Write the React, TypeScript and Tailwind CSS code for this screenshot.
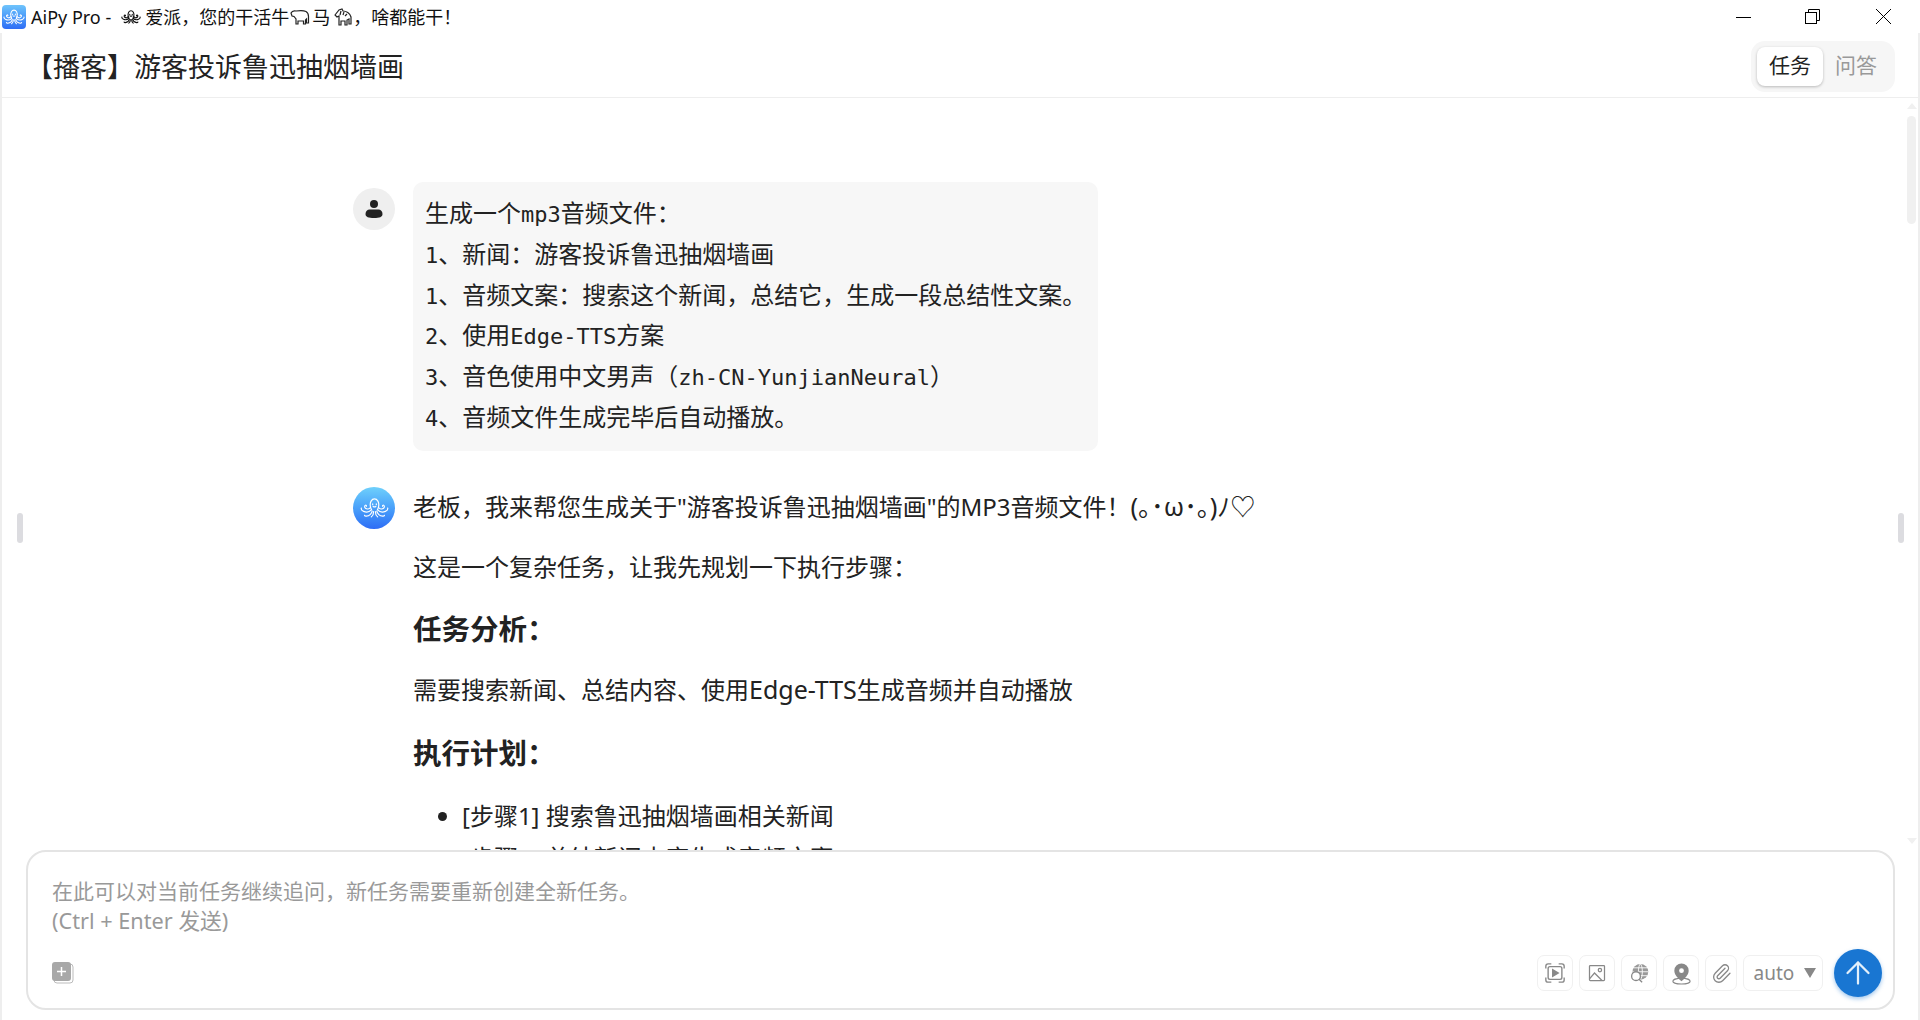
import { ArrowUp, Paperclip } from "lucide-react";

const cjk = "font-['Noto_Sans','Noto_Sans_CJK_SC',sans-serif]";

function Octopus({ className, color = "#fff", sw = 1.3 }: { className?: string; color?: string; sw?: number }) {
  return (
    <svg viewBox="0 0 32 22" className={className} fill="none" stroke={color} strokeWidth={sw} strokeLinecap="round">
      <path d="M11.500 9.500C10.500 4.500 13 1 16 1s5.500 3.500 4.500 8.500c-.3 1.500-.8 2.500-1.300 3.500M11.500 9.500c.3 1.500.8 2.500 1.300 3.500" />
      <path d="M14 6.500v.8M18 6.500v.8M14.500 9.300c1 .7 2 .7 3 0" />
      <path d="M11.500 10.500c-1.500 1.800-4 2-5.500.8-1.300-1-1-3-.1-3.300.8-.3 1.400.4 1.200 1.100" />
      <path d="M20.500 10.500c1.500 1.800 4 2 5.500.8 1.300-1 1-3 .1-3.300-.8-.3-1.400.4-1.200 1.100" />
      <path d="M12.500 13c-2 2.200-5.500 3-8.500 1.700C2 13.800 1 12.500 1.500 11" />
      <path d="M19.500 13c2 2.200 5.500 3 8.500 1.700 2-.9 3-2.200 2.500-3.700" />
      <path d="M13.500 14.500c-.8 3-3 5.200-6.500 5.500-1 .1-1.800-.4-2-1" />
      <path d="M18.500 14.500c.8 3 3 5.200 6.500 5.500 1 .1 1.800-.4 2-1" />
      <path d="M15 15c0 2.500-.8 4.500-2.500 5.800M17 15c0 2.500.8 4.500 2.500 5.800" />
    </svg>
  );
}

function Ox() {
  return (
    <svg viewBox="0 0 20 18" className="ml-[1px] mr-[2px] h-[18px] w-[20px] shrink-0" fill="none" stroke="#222" strokeWidth="1.200">
      <path d="M1 5c1-2 3-2.500 5-2 3-.5 8-.5 10 .5 1.500.8 2.500 2.500 2.500 5V15h-2v-4l-1 1v4h-2v-3H8v3H6v-5L4 8.500 2 8z" />
    </svg>
  );
}

function Horse() {
  return (
    <svg viewBox="0 0 20 20" className="ml-[3px] h-[20px] w-[20px] shrink-0" fill="none" stroke="#222" strokeWidth="1.200">
      <path d="M2 8l4-5 3-1 1 2c3 0 7 2 8 6v7h-2v-5l-2 1v5h-2v-4H8v4H6V9L4 10z" />
      <path d="M8 4l-1 4M11 5l-1 3M14 7l-2 2" />
    </svg>
  );
}

function ToolButton({ children, wide }: { children: React.ReactNode; wide?: boolean }) {
  return (
    <div className={`flex h-[36px] items-center justify-center rounded-[7px] border border-[#f0f0f0] ${wide ? "w-[32px]" : "w-[36px]"}`}>
      {children}
    </div>
  );
}

function Mono({ children }: { children: React.ReactNode }) {
  return <span className="font-['DejaVu_Sans_Mono'] text-[22px] leading-none">{children}</span>;
}

export default function App() {
  return (
    <div className={`relative flex h-[1020px] w-[1920px] flex-col overflow-hidden bg-white text-[#222] ${cjk}`}>
      {/* Title bar */}
      <div className="flex h-[33px] shrink-0 items-center">
        <div className="ml-[2px] flex h-[24px] w-[24px] items-center justify-center rounded-[4px] bg-gradient-to-b from-[#6fc4fb] to-[#2f6cf5]">
          <Octopus className="h-[16px] w-[22px]" sw={1.500} />
        </div>
        <div className="ml-[5px] flex items-center text-[18px] leading-none text-[#111]">
          <span>AiPy Pro -</span>
          <Octopus className="ml-[10px] mr-[4px] h-[18px] w-[20px]" color="#111" sw={1.800} />
          <span>爱派，您的干活牛</span>
          <Ox />
          <span>马</span>
          <Horse />
          <span>，啥都能干！</span>
        </div>
        <div className="ml-auto flex items-center">
          <svg viewBox="0 0 15 15" className="mr-[54px] h-[15px] w-[15px]" fill="none" stroke="#000">
            <path d="M0 8.500h15" />
          </svg>
          <svg viewBox="0 0 15 15" className="mr-[56px] h-[15px] w-[15px]" fill="none" stroke="#000">
            <rect x=".5" y="3.500" width="11" height="11" />
            <path d="M3.500 3.500v-3h11v11h-3" />
          </svg>
          <svg viewBox="0 0 15 15" className="mr-[29px] h-[15px] w-[15px]" fill="none" stroke="#000">
            <path d="M0 0l15 15M15 0L0 15" />
          </svg>
        </div>
      </div>

      <div className="flex min-h-0 flex-1 flex-col border-x-2 border-[#eeeeee]">
        {/* Header */}
        <div className="flex h-[65px] shrink-0 items-center justify-between border-b border-[#eeeeee] pl-[24px] pr-[23px] pt-[3px]">
          <h1 className="text-[27px] font-normal leading-none">【播客】游客投诉鲁迅抽烟墙画</h1>
          <div className="flex h-[51px] w-[144px] items-center rounded-[14px] bg-[#f6f6f6] px-[6px] pb-[1px]">
            <div className="flex h-[39px] w-[66px] items-center justify-center rounded-[8px] bg-white text-[21px] shadow-[0_1px_3px_rgba(0,0,0,0.25)]">任务</div>
            <div className="flex h-[39px] w-[66px] items-center justify-center text-[21px] text-[#999]">问答</div>
          </div>
        </div>

        {/* Messages */}
        <div className="min-h-0 flex-1 overflow-hidden pl-[351px] pt-[84px]">
          <div className="flex gap-[18px]">
            <div className="mt-[6px] flex h-[42px] w-[42px] shrink-0 items-center justify-center rounded-full bg-[#efefef]">
              <svg viewBox="0 0 20 20" className="h-[20px] w-[20px]" fill="#222">
                <circle cx="10" cy="5" r="4" />
                <path d="M1.500 15c0-3 2-4.500 4-4.500h9c2 0 4 1.500 4 4.500s-3 4-8.500 4-8.500-1-8.500-4z" />
              </svg>
            </div>
            <div className="w-[685px] whitespace-nowrap rounded-[10px] bg-[#f7f7f7] px-[12px] pb-[13px] pt-[11px] text-[24px] leading-[40.8px]">
              <p>生成一个<Mono>mp3</Mono>音频文件：</p>
              <p><Mono>1</Mono>、新闻：游客投诉鲁迅抽烟墙画</p>
              <p><Mono>1</Mono>、音频文案：搜索这个新闻，总结它，生成一段总结性文案。</p>
              <p><Mono>2</Mono>、使用<Mono>Edge-TTS</Mono>方案</p>
              <p><Mono>3</Mono>、音色使用中文男声（<Mono>zh-CN-YunjianNeural</Mono>）</p>
              <p><Mono>4</Mono>、音频文件生成完毕后自动播放。</p>
            </div>
          </div>

          <div className="mt-[36px] flex gap-[18px]">
            <div className="flex h-[42px] w-[42px] shrink-0 items-center justify-center rounded-full bg-gradient-to-b from-[#6fd0fb] to-[#2f6cf5]">
              <Octopus className="h-[20px] w-[29px]" />
            </div>
            <div className="text-[24px] leading-[36px] text-[#222]">
              <p className="mt-[2px]">老板，我来帮您生成关于"游客投诉鲁迅抽烟墙画"的MP3音频文件！<span className="text-[25.500px] leading-none">(｡･ω･｡)ﾉ♡</span></p>
              <p className="mt-[24px]">这是一个复杂任务，让我先规划一下执行步骤：</p>
              <h3 className="mt-[26px] text-[28.500px] font-bold">任务分析：</h3>
              <p className="mt-[25px]">需要搜索新闻、总结内容、使用<span className="text-[25px] leading-none">Edge-TTS</span>生成音频并自动播放</p>
              <h3 className="mt-[27px] text-[28.500px] font-bold">执行计划：</h3>
              <ul className="mt-[24px] list-disc pl-[49px] leading-[42px]">
                <li>[步骤1] 搜索鲁迅抽烟墙画相关新闻</li>
                <li>[步骤2] 总结新闻内容生成音频文案</li>
              </ul>
            </div>
          </div>
        </div>

        {/* Input */}
        <div className="mb-[10px] ml-[24px] mr-[23px] flex h-[160px] shrink-0 flex-col rounded-[20px] border-2 border-[#e4e4e4] pl-[24px] pr-[11px] pt-[24px]">
          <p className="text-[21px] leading-[30px] text-[#999]">
            在此可以对当前任务继续追问，新任务需要重新创建全新任务。
            <br />
            <span className="text-[21.700px]">(Ctrl + Enter 发送)</span>
          </p>
          <div className="mt-auto flex items-center justify-between pb-[11px]">
            <svg viewBox="0 0 22 22" className="h-[22px] w-[22px]">
              <rect x="2" y="2" width="19" height="19" rx="3" fill="none" stroke="#bbb" />
              <rect x="0" y="0" width="19" height="19" rx="3" fill="#a8a8a8" />
              <path d="M9.500 5v9M5 9.500h9" stroke="#fff" strokeWidth="1.500" />
            </svg>
            <div className="flex items-center">
              <div className="flex items-center gap-[6px]">
                <ToolButton>
                  <svg viewBox="0 0 24 24" className="h-[22px] w-[22px]" fill="none" stroke="#888" strokeWidth="1.500">
                    <path d="M2 7V4.500A2.500 2.500 0 0 1 4.500 2H8M16 2h3.500A2.500 2.500 0 0 1 22 4.500V7M22 17v2.500a2.500 2.500 0 0 1-2.500 2.500H16M8 22H4.500A2.500 2.500 0 0 1 2 19.500V17" />
                    <rect x="4.500" y="5" width="15" height="14" rx="2" />
                    <path d="M9.500 8.500v7l6-3.500z" fill="#888" />
                  </svg>
                </ToolButton>
                <ToolButton>
                  <svg viewBox="0 0 24 24" className="h-[20px] w-[20px]" fill="none" stroke="#888" strokeWidth="1.500">
                    <rect x="3" y="3" width="18" height="18" rx="1" />
                    <circle cx="15.500" cy="8.500" r="2" />
                    <path d="M3 19l6-7 9 9" />
                  </svg>
                </ToolButton>
                <ToolButton>
                  <svg viewBox="0 0 24 24" className="h-[21px] w-[21px]" fill="none" stroke="#888" strokeWidth="1.500">
                    <circle cx="13" cy="10" r="9" fill="#999" stroke="none" />
                    <path d="M13 1c-3 2.500-3 15 0 18M13 1c3 2.500 3 15 0 18M4 10h18M5 5.500h16M5 14.500h16" stroke="#fff" strokeWidth="1" />
                    <circle cx="8" cy="15" r="5" fill="#fff" stroke="#888" />
                    <path d="M11.500 18.500l3.500 3.500" />
                  </svg>
                </ToolButton>
                <ToolButton>
                  <svg viewBox="0 0 24 24" className="h-[23px] w-[23px]">
                    <path d="M12 1.500a7.500 7.500 0 0 0-7.500 7.500c0 4.500 4.500 8.500 7.500 11 3-2.500 7.500-6.500 7.500-11A7.500 7.500 0 0 0 12 1.500z" fill="#888" />
                    <circle cx="12" cy="9" r="2.500" fill="#fff" />
                    <ellipse cx="12" cy="20" rx="9" ry="3" fill="none" stroke="#888" strokeWidth="1.200" />
                  </svg>
                </ToolButton>
                <ToolButton wide>
                  <Paperclip className="h-[21px] w-[21px] text-[#888]" strokeWidth={1.500} />
                </ToolButton>
                <div className="flex h-[36px] w-[80px] items-center justify-center gap-[10px] rounded-[7px] border border-[#f0f0f0] pl-[4px] text-[19px] text-[#888]">
                  <span>auto</span>
                  <span className="h-0 w-0 border-x-[6px] border-t-[10px] border-x-transparent border-t-[#888]" />
                </div>
              </div>
              <div className="ml-[11px] flex h-[48px] w-[48px] items-center justify-center rounded-full bg-[#1976d2] shadow-[0_2px_4px_rgba(25,118,210,0.4)]">
                <ArrowUp className="h-[36px] w-[36px] text-[#e3f0fb]" strokeWidth={1.500} />
              </div>
            </div>
          </div>
        </div>
      </div>

      {/* Scrollbar and panel resize handles */}
      <div className="absolute left-[1907px] top-[103px] h-0 w-0 border-x-[5px] border-b-[6px] border-x-transparent border-b-[#f0f0f0]" />
      <div className="absolute left-[1907px] top-[116px] h-[108px] w-[9px] rounded-full bg-[#f0f0f0]" />
      <div className="absolute left-[1907px] top-[838px] h-0 w-0 border-x-[5px] border-t-[6px] border-x-transparent border-t-[#f0f0f0]" />
      <div className="absolute left-[17px] top-[513px] h-[30px] w-[6px] rounded-full bg-[#dcdce0]" />
      <div className="absolute left-[1898px] top-[513px] h-[30px] w-[6px] rounded-full bg-[#dcdce0]" />
    </div>
  );
}
